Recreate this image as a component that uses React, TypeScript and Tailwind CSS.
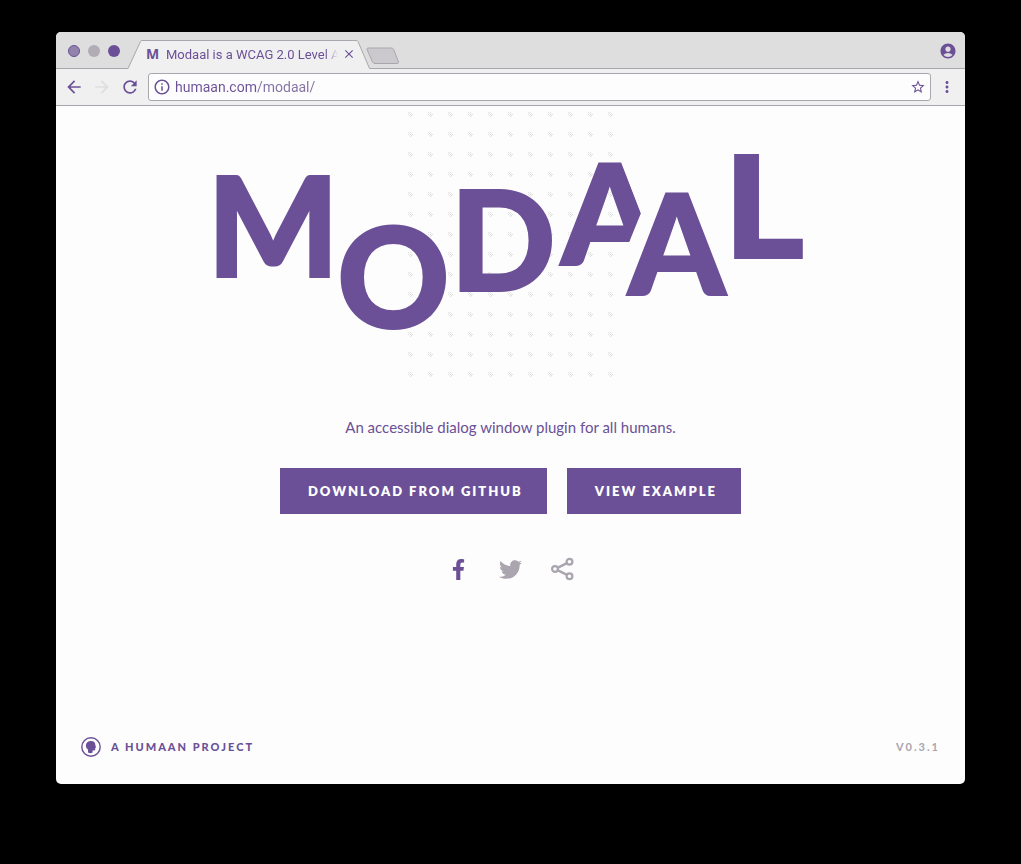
import { FaFacebookF, FaTwitter } from "react-icons/fa";
import { MdAccountCircle, MdArrowBack, MdArrowForward, MdClose, MdInfoOutline, MdMoreVert, MdRefresh, MdStarBorder } from "react-icons/md";

const logoLetters = [
  { char: "M", x: 207, y: 277 },
  { char: "O", x: 337, y: 328 },
  { char: "D", x: 450, y: 291 },
  { char: "A", x: 561, y: 265, clip: "url(#folded-a)" },
  { char: "A", x: 628, y: 295 },
];

function TitleBar() {
  return (
    <header className="relative flex h-9 items-end justify-between bg-[#dedede] pr-2">
      <div className="flex h-full items-end">
        <div className="flex gap-2 self-center pl-3 pt-0.5">
          <button aria-label="Close window" className="size-3 rounded-full border border-[#6b5097] bg-[#9283ac]" />
          <button aria-label="Minimise window" className="size-3 rounded-full bg-[#b1acb5]" />
          <button aria-label="Zoom window" className="size-3 rounded-full bg-[#6b5097]" />
        </div>
        <div className="relative ml-2 flex h-7 w-[242px] items-center pl-[18px] pr-3">
          <svg className="absolute left-0 top-0 h-[29px] w-[242px]" viewBox="0 0 242 29" aria-hidden="true">
            <path d="M0 29V28.500L12.500 1.500Q13 .5 14 .5H228Q229.500 .5 230 1.500L241.500 28.500V29Z" fill="#f0f0f0" />
            <path d="M0 28.500L12.500 1.500Q13 .5 14 .5H228Q229.500 .5 230 1.500L241.500 28.500" fill="none" stroke="#aaa6ad" />
          </svg>
          <span aria-hidden="true" className="relative w-5 font-['Open_Sans'] text-sm font-bold">M</span>
          <span className="relative w-[172px] overflow-hidden whitespace-nowrap pt-px font-[Roboto,sans-serif] text-[13px] [mask-image:linear-gradient(90deg,#000_92%,transparent)]">
            Modaal is a WCAG 2.0 Level A
          </span>
          <button aria-label="Close tab" className="relative ml-1"><MdClose size={14} /></button>
        </div>
        <button aria-label="New tab" className="-ml-1 mb-[3px]">
          <svg className="h-[18px] w-[34px]" viewBox="0 0 34 18" aria-hidden="true">
            <path d="M1.500 1H25.500Q27 1 27.700 2.500L32.500 15Q32.500 16.500 31 16.500H9Q7.500 16.500 6.500 15L1 2.500Q1 1 1.500 1Z" fill="#cbc9cd" stroke="#aaa6ad" />
          </svg>
        </button>
      </div>
      <button aria-label="Profile" className="self-center pt-0.5"><MdAccountCircle size={18} /></button>
    </header>
  );
}

function Toolbar() {
  return (
    <nav className="flex h-[38px] items-center border-y border-[#aaa6ad] bg-[#f0f0f0] pl-2 pr-[9px]">
      <button aria-label="Back"><MdArrowBack size={20} /></button>
      <button aria-label="Forward" className="ml-2 text-[#dedede]"><MdArrowForward size={20} /></button>
      <button aria-label="Reload" className="ml-2"><MdRefresh size={20} /></button>
      <div className="ml-2 flex h-7 flex-1 items-center rounded-[3px] border border-[#aaa6ad] bg-[#fdfdfd] px-1">
        <MdInfoOutline size={18} />
        <input
          aria-label="Address"
          defaultValue="humaan.com/modaal/"
          className="ml-1 min-w-0 flex-1 bg-[linear-gradient(90deg,#6b5097_82px,#8370a2_82px)] bg-clip-text font-[Roboto,sans-serif] text-sm text-transparent outline-none"
        />
        <button aria-label="Bookmark this page"><MdStarBorder size={16} /></button>
      </div>
      <button aria-label="Menu" className="ml-[7px]"><MdMoreVert size={18} /></button>
    </nav>
  );
}

function Logo() {
  return (
    <svg className="h-[280px] w-[610px] max-w-full" viewBox="206 106 610 280" role="img" aria-label="Modaal">
      <defs>
        <pattern id="dots" x="401" y="104" width="20" height="20" patternUnits="userSpaceOnUse">
          <path d="M7.5 8.5l4 4M9.5 8.5l2 2M7.5 10.5l2 2" stroke="#c4c4c4" strokeWidth="1" strokeDasharray="1 1" />
        </pattern>
        <clipPath id="folded-a"><path d="M540 140H613L641 213L629 242.5H590V280H540Z" /></clipPath>
      </defs>
      <rect x="401" y="104" width="220" height="280" fill="url(#dots)" />
      <g fill="#6b5097" stroke="#6b5097" strokeWidth="2" className="font-[Lato,sans-serif] text-[139px] font-black">
        {logoLetters.map((l) => (
          <g key={l.x} clipPath={l.clip}>
            <text x={l.x} y={l.y}>{l.char}</text>
          </g>
        ))}
      </g>
      <text x="726" y="259" fill="#6b5097" className="font-[Inter,sans-serif] text-[144px] font-extrabold">L</text>
    </svg>
  );
}

function ShareIcon() {
  return (
    <svg className="size-6" viewBox="0 0 24 24" fill="none" stroke="#aaa5ae" aria-hidden="true">
      <path d="M7 10.600L15.500 6.400M7 13.400L15.500 17.600" strokeWidth="2.400" />
      <circle cx="4" cy="12" r="2.900" strokeWidth="2.200" />
      <circle cx="18.500" cy="4.800" r="2.900" strokeWidth="2.200" />
      <circle cx="18.500" cy="19.200" r="2.900" strokeWidth="2.200" />
    </svg>
  );
}

function HumaanIcon() {
  return (
    <svg className="size-5" viewBox="0 0 20 20" aria-hidden="true">
      <circle cx="10" cy="10" r="9.2" fill="none" stroke="currentColor" strokeWidth="1.4" />
      <path d="M7 15.500V12.600C5.500 11.500 4.800 10 4.900 8.200C5 5.500 7 3.900 10 3.900C12.800 3.900 14.300 5.500 14.300 7.700L15 10.400L14.200 10.900V13.200L11.600 13.600V15.500C10 16.400 8.500 16.300 7 15.500Z" fill="currentColor" />
    </svg>
  );
}

export default function App() {
  const action = "flex h-[46px] items-center bg-[#6b5097] pl-7 pr-6 pt-0.5 text-[13px] font-extrabold tracking-[2px] text-white";
  return (
    <div className="flex min-h-screen flex-col bg-black px-14 pb-20 pt-8 text-[#6b5097]">
      <div className="flex flex-1 flex-col overflow-hidden rounded-[5px] bg-[#fdfdfd]">
        <TitleBar />
        <Toolbar />
        <main className="flex flex-1 flex-col items-center font-[Lato,sans-serif]">
          <h1><Logo /></h1>
          <p className="mt-[29px] text-[15px] leading-6">An accessible dialog window plugin for all humans.</p>
          <div className="mt-[29px] flex gap-5">
            <a href="#download" className={action}>DOWNLOAD FROM GITHUB</a>
            <a href="#example" className={action}>VIEW EXAMPLE</a>
          </div>
          <div className="mt-[43px] flex items-center gap-7">
            <a href="#facebook" aria-label="Facebook" className="flex w-6 justify-center"><FaFacebookF size={21} /></a>
            <a href="#twitter" aria-label="Twitter" className="flex w-6 justify-center text-[#aaa5ae]"><FaTwitter size={23} /></a>
            <a href="#share" aria-label="Share"><ShareIcon /></a>
          </div>
        </main>
        <footer className="flex items-center justify-between px-[25px] pb-[27px] font-[Lato,sans-serif] text-[11px] tracking-[2px]">
          <a href="#humaan" className="flex items-center gap-2.5 font-black"><HumaanIcon />A HUMAAN PROJECT</a>
          <span className="font-bold text-[#aaa5ae]">V0.3.1</span>
        </footer>
      </div>
    </div>
  );
}
